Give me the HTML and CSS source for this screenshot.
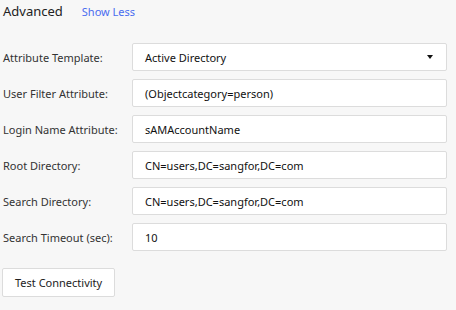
FILE: index.html
```html
<!DOCTYPE html>
<html lang="en">
<head>
    <meta charset="UTF-8">
    <title>Advanced</title>
    <link rel="stylesheet" href="styles.css">
</head>
<body>
    <div class="panel">
        <header class="panel-header">
            <h2>Advanced</h2>
            <a class="toggle-link" href="#">Show Less</a>
        </header>

        <div class="form">
            <div class="form-row">
                <label>Attribute Template:</label>
                <div class="field select">
                    <span>Active Directory</span>
                    <span class="caret"></span>
                </div>
            </div>
            <div class="form-row">
                <label>User Filter Attribute:</label>
                <div class="field">(Objectcategory=person)</div>
            </div>
            <div class="form-row">
                <label>Login Name Attribute:</label>
                <div class="field">sAMAccountName</div>
            </div>
            <div class="form-row">
                <label>Root Directory:</label>
                <div class="field">CN=users,DC=sangfor,DC=com</div>
            </div>
            <div class="form-row">
                <label>Search Directory:</label>
                <div class="field">CN=users,DC=sangfor,DC=com</div>
            </div>
            <div class="form-row">
                <label>Search Timeout (sec):</label>
                <div class="field">10</div>
            </div>
        </div>

        <button class="test-button">Test Connectivity</button>
    </div>
</body>
</html>
```

FILE: styles.css
```css
:root {
    --background-color: #f7f7f7;
    --border-color: #dcdcdc;
    --text-primary: #333333;
    --link-color: #4a6cf0;
}

* {
    margin: 0;
    padding: 0;
    box-sizing: border-box;
}

body {
    font-family: 'Noto Sans', sans-serif;
    background-color: var(--background-color);
    color: var(--text-primary);
    font-size: 11px;
}

.panel {
    padding: 2px 9px 0 3px;
}

.panel-header {
    display: flex;
    align-items: baseline;
    gap: 19px;
    height: 26px;
}

.panel-header h2 {
    font-size: 13px;
    font-weight: 400;
    color: #222;
}

.toggle-link {
    color: var(--link-color);
    text-decoration: none;
    font-size: 11px;
}

.form {
    margin-top: 15px;
    display: flex;
    flex-direction: column;
    gap: 8px;
}

.form-row {
    display: flex;
    align-items: center;
}

.form-row label {
    width: 129px;
    flex-shrink: 0;
}

.field {
    flex: 1;
    height: 28px;
    display: flex;
    align-items: center;
    padding: 0 12px;
    background: #ffffff;
    border: 1px solid var(--border-color);
    border-radius: 2px;
    color: #111;
}

.select {
    justify-content: space-between;
}

.caret {
    width: 0;
    height: 0;
    border-left: 3px solid transparent;
    border-right: 3px solid transparent;
    border-top: 4px solid #111;
    margin-right: 1px;
}

.test-button {
    margin-top: 17px;
    margin-left: -1px;
    height: 29px;
    padding: 0 12px;
    font-family: inherit;
    font-size: 11px;
    color: #222;
    background: #ffffff;
    border: 1px solid var(--border-color);
    border-radius: 2px;
}
```
